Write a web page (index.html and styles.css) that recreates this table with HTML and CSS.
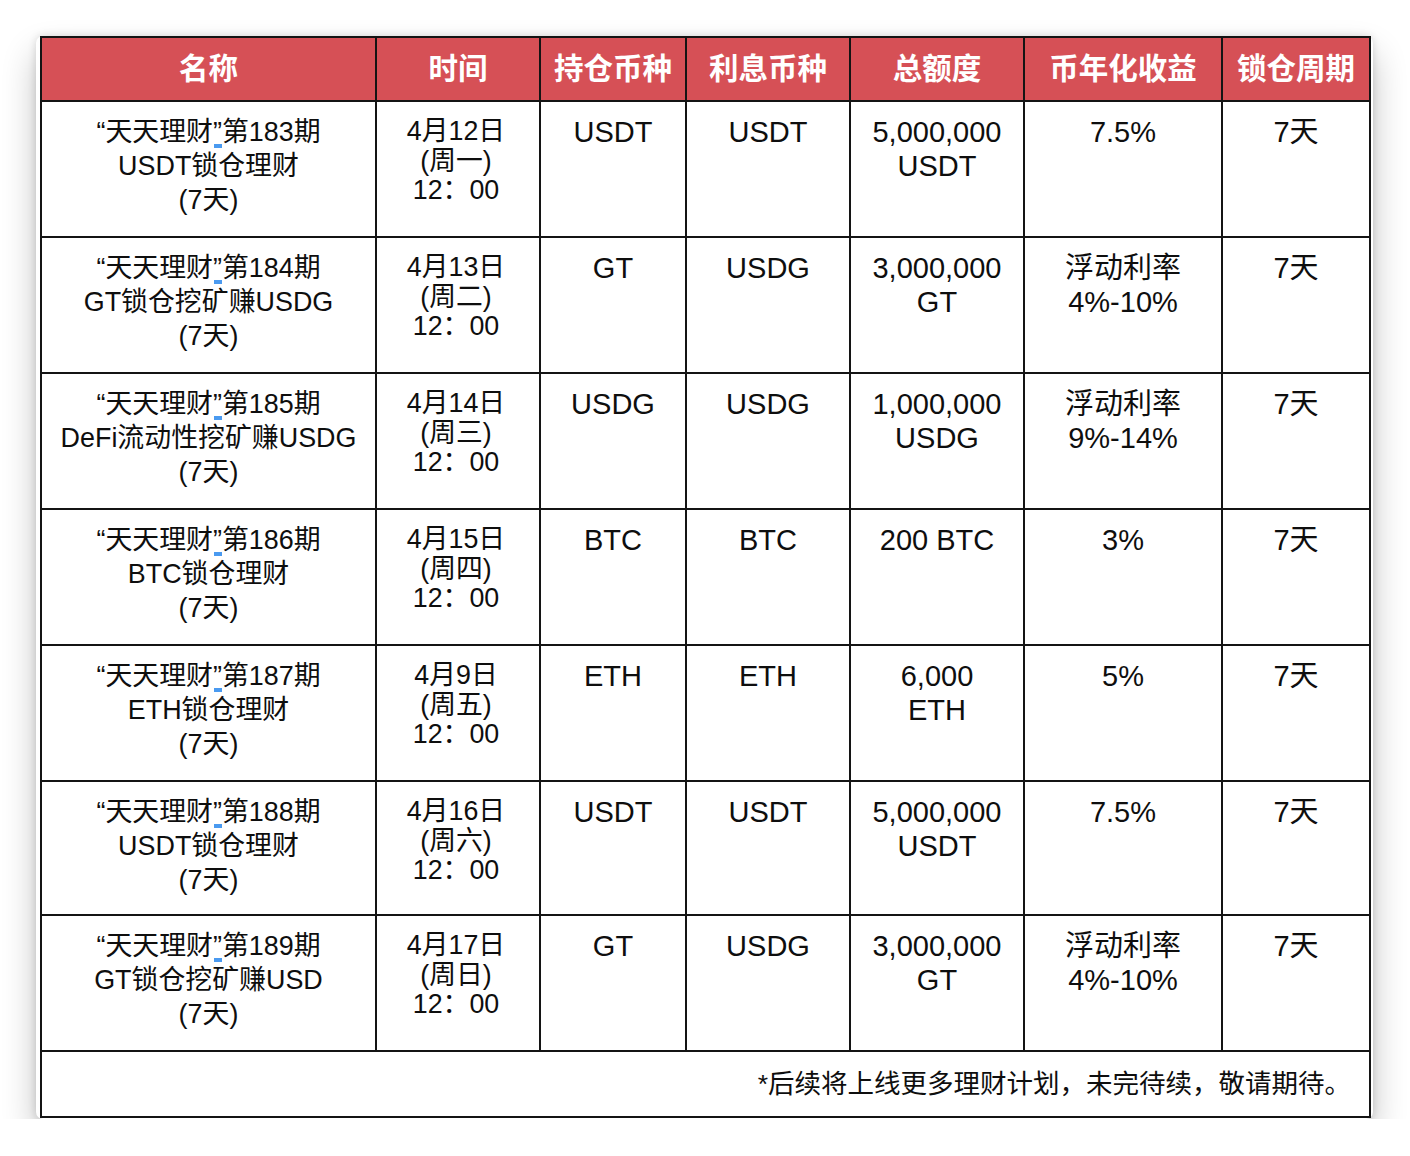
FILE: index.html
```html
<!DOCTYPE html>
<html lang="zh-CN">
<head>
<meta charset="utf-8">
<title>天天理财</title>
<link rel="stylesheet" href="styles.css">
</head>
<body>
<div class="window">
  <table class="plan">
    <colgroup>
      <col class="c-name"><col class="c-time"><col class="c-hold"><col class="c-int"><col class="c-total"><col class="c-yield"><col class="c-lock">
    </colgroup>
    <thead>
      <tr><th>名称</th><th>时间</th><th>持仓币种</th><th>利息币种</th><th>总额度</th><th>币年化收益</th><th>锁仓周期</th></tr>
    </thead>
    <tbody>
      <tr>
        <td class="name">“天天理财<span class="mark">”</span>第183期<br>USDT锁仓理财<br>(7天)</td>
        <td class="time">4月12日<br>(周一)<br>12：00</td>
        <td>USDT</td><td>USDT</td><td>5,000,000<br>USDT</td><td>7.5%</td><td>7天</td>
      </tr>
      <tr>
        <td class="name">“天天理财<span class="mark">”</span>第184期<br>GT锁仓挖矿赚USDG<br>(7天)</td>
        <td class="time">4月13日<br>(周二)<br>12：00</td>
        <td>GT</td><td>USDG</td><td>3,000,000<br>GT</td><td>浮动利率<br>4%-10%</td><td>7天</td>
      </tr>
      <tr>
        <td class="name">“天天理财<span class="mark">”</span>第185期<br>DeFi流动性挖矿赚USDG<br>(7天)</td>
        <td class="time">4月14日<br>(周三)<br>12：00</td>
        <td>USDG</td><td>USDG</td><td>1,000,000<br>USDG</td><td>浮动利率<br>9%-14%</td><td>7天</td>
      </tr>
      <tr>
        <td class="name">“天天理财<span class="mark">”</span>第186期<br>BTC锁仓理财<br>(7天)</td>
        <td class="time">4月15日<br>(周四)<br>12：00</td>
        <td>BTC</td><td>BTC</td><td>200 BTC</td><td>3%</td><td>7天</td>
      </tr>
      <tr>
        <td class="name">“天天理财<span class="mark">”</span>第187期<br>ETH锁仓理财<br>(7天)</td>
        <td class="time">4月9日<br>(周五)<br>12：00</td>
        <td>ETH</td><td>ETH</td><td>6,000<br>ETH</td><td>5%</td><td>7天</td>
      </tr>
      <tr class="short">
        <td class="name">“天天理财<span class="mark">”</span>第188期<br>USDT锁仓理财<br>(7天)</td>
        <td class="time">4月16日<br>(周六)<br>12：00</td>
        <td>USDT</td><td>USDT</td><td>5,000,000<br>USDT</td><td>7.5%</td><td>7天</td>
      </tr>
      <tr>
        <td class="name">“天天理财<span class="mark">”</span>第189期<br>GT锁仓挖矿赚USD<br>(7天)</td>
        <td class="time">4月17日<br>(周日)<br>12：00</td>
        <td>GT</td><td>USDG</td><td>3,000,000<br>GT</td><td>浮动利率<br>4%-10%</td><td>7天</td>
      </tr>
      <tr class="foot">
        <td colspan="7">*后续将上线更多理财计划，未完待续，敬请期待。</td>
      </tr>
    </tbody>
  </table>
</div>
</body>
</html>
```
FILE: styles.css
```css
html, body {
  margin: 0;
  padding: 0;
  background: #ffffff;
}
body {
  padding: 36px 0 0 36px;
  font-family: "Liberation Sans", "Noto Sans CJK SC", sans-serif;
  color: #0e0e0e;
}
.window {
  width: 1337px;
  background: #ffffff;
  border-radius: 7px;
  padding: 0 4px 1px 4px;
  box-sizing: border-box;
  box-shadow: 0 18px 34px rgba(0, 0, 0, 0.24), 0 0 9px rgba(0, 0, 0, 0.14);
}
.plan {
  border-collapse: collapse;
  table-layout: fixed;
  width: 1329px;
  font-size: 29px;
}
.c-name { width: 335px; }
.c-time { width: 164px; }
.c-hold { width: 146px; }
.c-int { width: 164px; }
.c-total { width: 174px; }
.c-yield { width: 198px; }
.c-lock { width: 148px; }

.plan th, .plan td {
  border: 2px solid #141414;
  text-align: center;
  padding: 0;
}
.plan th {
  background: #d65056;
  color: #ffffff;
  font-weight: bold;
  height: 62px;
  line-height: 30px;
  font-size: 29.5px;
}
.plan td {
  vertical-align: top;
  height: 136px;
  box-sizing: border-box;
  padding-top: 13px;
  line-height: 34px;
}
.plan tr.short td {
  height: 134px;
}
.plan td.name {
  font-size: 26.9px;
}
.plan td.time {
  font-size: 26.8px;
  line-height: 29.5px;
  padding: 15px 4px 0 0;
}
.plan tr.foot td {
  height: 66px;
  vertical-align: middle;
  padding: 0 18px 0 0;
  text-align: right;
  line-height: 30px;
  font-size: 26.5px;
}
.mark {
  position: relative;
}
.mark::after {
  content: "";
  position: absolute;
  left: 1px;
  bottom: -1px;
  width: 8px;
  height: 4px;
  background: #4a9af0;
}
```
